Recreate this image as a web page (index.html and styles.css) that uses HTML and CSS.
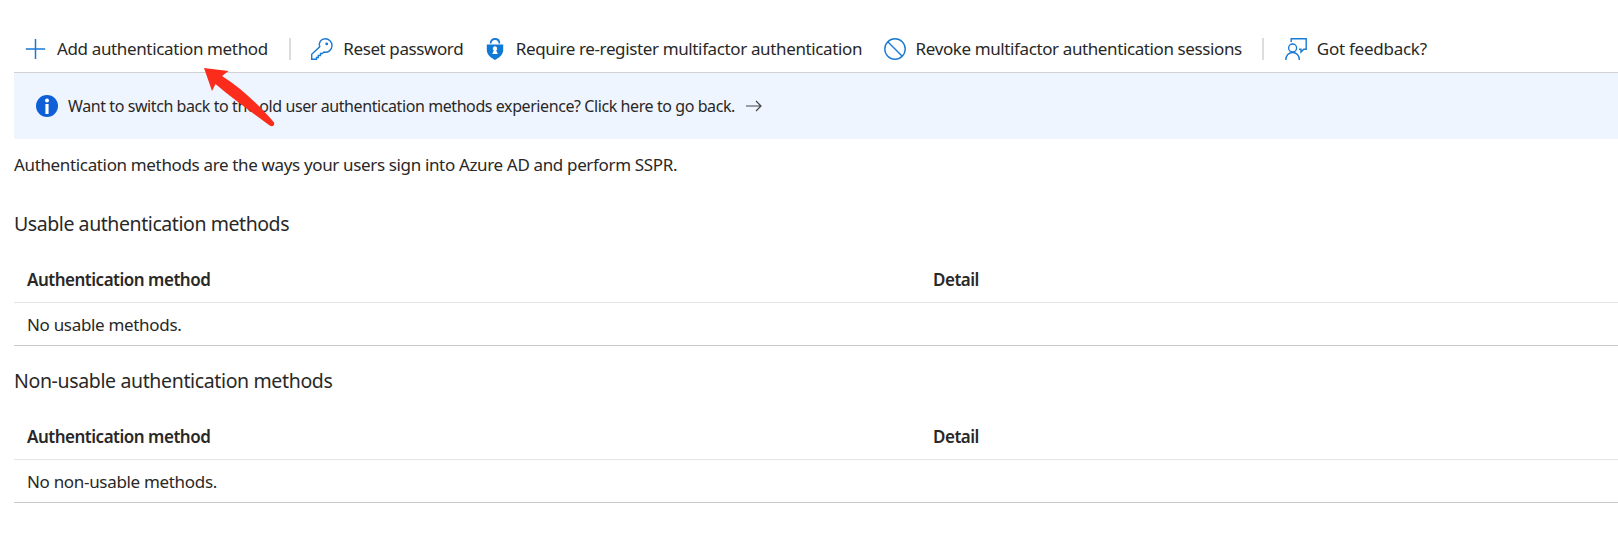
FILE: index.html
```html
<!DOCTYPE html>
<html lang="en">
<head>
<meta charset="utf-8">
<title>Authentication methods</title>
<link rel="stylesheet" href="styles.css">
</head>
<body>
<main class="page">
  <nav class="toolbar">
    <a class="command add"><svg class="icon" viewBox="0 0 22 22"><path d="M10.500 1v20M.800 11h19.400" stroke-width="1.500"/></svg><span>Add authentication method</span></a>
    <i class="divider"></i>
    <a class="command reset"><svg class="icon" viewBox="0 0 22 22"><path d="M.700 21.300v-5l8-7.500C7.300 4.500 10 .700 14.200.700A6.800 6.800 0 0 1 21 7.500c0 4.500-4 7.700-8 6.500l-1.700 1.500H9.500v2H7.300v2H5.500v1.800Z"/><circle cx="15.700" cy="5.900" r="1.400" class="solid"/></svg><span>Reset password</span></a>
    <a class="command require"><svg class="icon" viewBox="0 0 22 22"><path d="M6.600 5.500C6.600 2.500 8.400 1 11 1s4.400 1.500 4.400 4.500" stroke-width="1.800"/><path class="shield" d="M2.800 6.500H19.200V12c0 4.500-3.700 7.600-8.200 10-4.500-2.400-8.200-5.500-8.200-10Z"/><path class="keyhole" d="M11 8.300a2.300 2.300 0 0 1 1.200 4.200l1.600 3.600H8.200L9.800 12.500A2.300 2.300 0 0 1 11 8.300Z"/></svg><span>Require re-register multifactor authentication</span></a>
    <a class="command revoke"><svg class="icon" viewBox="0 0 22 22"><circle cx="11" cy="11" r="10.200"/><path d="M3.800 3.800l14.400 14.400"/></svg><span>Revoke multifactor authentication sessions</span></a>
    <i class="divider"></i>
    <a class="command feedback"><svg class="icon" viewBox="0 0 22 22"><path d="M6.200 4V.800h15v10.400h-2.400L16 14v-2.800h-2"/><circle cx="7.600" cy="10" r="4"/><path d="M.800 22c0-4.500 3-7.500 6.800-7.500s6.800 3 6.800 7.500"/></svg><span>Got feedback?</span></a>
  </nav>
  <section class="banner">
    <svg class="info" viewBox="0 0 22 22"><circle cx="11" cy="11" r="11"/><circle cx="11" cy="5.500" r="2" class="mark"/><path class="mark" d="M9.400 9h3.200v10H9.400Z"/></svg>
    <span>Want to switch back to the old user authentication methods experience? Click here to go back.</span>
    <svg class="go" viewBox="0 0 16 12"><path d="M0 6h15M10 1l5 5-5 5"/></svg>
  </section>
  <p class="intro">Authentication methods are the ways your users sign into Azure AD and perform SSPR.</p>
  <section class="methods">
    <h2 class="title usable">Usable authentication methods</h2>
    <div class="row head"><span>Authentication method</span><span>Detail</span></div>
    <div class="row body"><span>No usable methods.</span></div>
  </section>
  <section class="methods">
    <h2 class="title">Non-usable authentication methods</h2>
    <div class="row head"><span>Authentication method</span><span>Detail</span></div>
    <div class="row body"><span>No non-usable methods.</span></div>
  </section>
  <svg class="pointer" viewBox="0 0 71 59"><path d="M0 0l24.500 3-6.500 5C37 20 54 36 70 54.500c1 3-1.500 4.500-4 3.200C46 43 28 30 11.500 16L8 23Z"/></svg>
</main>
</body>
</html>
```
FILE: styles.css
```css
*{box-sizing:border-box}
body{margin:0;background:#fff;color:#292827;font:17px/24px "Noto Sans","Open Sans",sans-serif;overflow:hidden}
.page{position:relative;height:558px;padding:25px 0 0 14px;overflow:hidden}
.toolbar{display:flex;align-items:center;height:48px;padding-left:11px;border-bottom:1px solid #d2d0ce}
.command{display:flex;align-items:center;gap:10px;white-space:nowrap}
.add{letter-spacing:-.36px;margin-right:1px}
.reset{letter-spacing:-.4px;margin-left:.5px}
.require{letter-spacing:-.37px}
.revoke{letter-spacing:-.39px}
.feedback{letter-spacing:-.26px;margin-left:1px}
.icon{width:22px;height:22px;flex:none;fill:none;stroke:#1a7ad4;stroke-width:1.4}
.solid,.shield{fill:#1079d6;stroke:none}
.keyhole{fill:#fff;stroke:none}
.divider{width:2px;height:22px;margin:0 20px;background:#dcdcdc}
.require{margin-left:20.5px}
.revoke{margin-left:21.5px}
.banner{display:flex;align-items:center;height:66px;padding-left:22px;background:#eff5fe;border-radius:2px 0 0 2px;font-size:16px;letter-spacing:-.415px}
.info{width:22px;height:22px;margin-right:10px;fill:#0f5fd9}
.mark{fill:#fff}
.go{width:16px;height:12px;margin-left:11px;fill:none;stroke:#444;stroke-width:1.2}
.intro{margin:14px 0 0;letter-spacing:-.35px}
.methods{height:157px}
.intro+.methods{margin-top:34px}
.title{margin:0;font-size:19.5px;line-height:26px;font-weight:400;letter-spacing:-.36px}
.usable{letter-spacing:-.43px}
.row{display:grid;grid-template-columns:906px 1fr;align-items:center;padding-left:13px}
.head{height:45px;margin-top:21px;font-weight:600;letter-spacing:-.49px;border-bottom:1px solid #e5e5e5}
.body{height:43px;padding-top:2px;letter-spacing:-.32px;border-bottom:1px solid #c8c8c8}
.pointer{position:absolute;left:204px;top:68px;width:71px;height:59px;fill:#fc2c1d}
```
